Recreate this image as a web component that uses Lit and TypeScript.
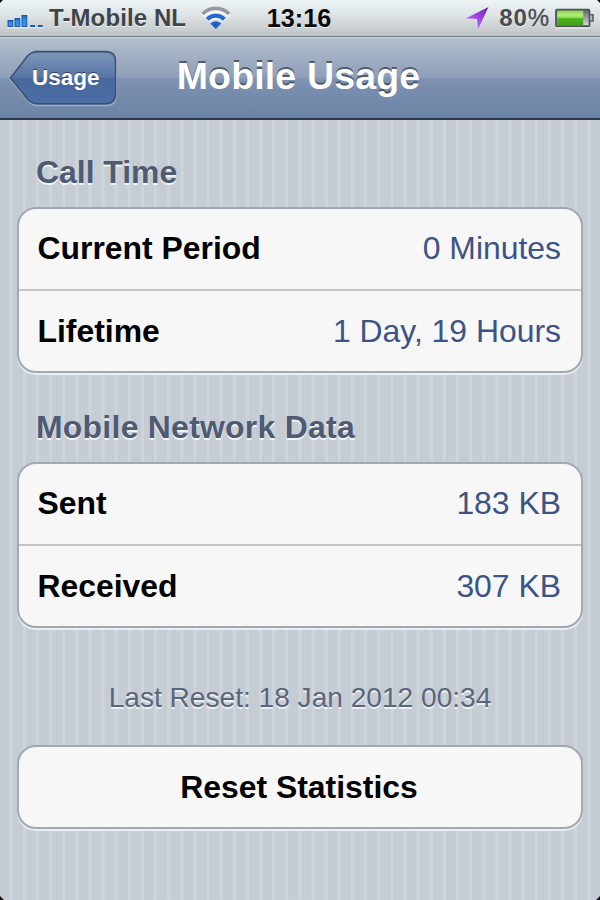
import { LitElement, html, svg, css } from "lit";
import { customElement, property } from "lit/decorators.js";

@customElement("status-bar")
class StatusBar extends LitElement {
  static styles = css`
    :host {
      display: grid;
      grid-template-columns: 1fr auto 1fr;
      height: 37px;
      box-sizing: border-box;
      border-bottom: 1px solid #707882;
      background: linear-gradient(#edf4f6 0%, #dce2e4 45%, #bec3c6 100%);
      font-weight: bold;
      line-height: 36px;
      color: #40444a;
      text-shadow: 0 1px 0 rgba(255, 255, 255, 0.7);
      white-space: nowrap;
    }
    .side { display: flex; align-items: flex-start; }
    .left { padding-left: 6px; }
    .right { justify-content: flex-end; padding-right: 5px; }
    svg { display: block; flex: none; }
    .carrier { font-size: 24px; margin-left: 5px; letter-spacing: 0.1px; }
    .wifi { margin-left: 14px; }
    .time { font-size: 25.2px; color: #0a0a0c; padding-right: 2px; }
    .percent { font-size: 24px; margin: 0 6px 0 10px; color: #484b50; letter-spacing: 0.9px; font-weight: bold; }
    .sign { font-weight: normal; letter-spacing: 0; -webkit-text-stroke: 0.4px #484b50; }
  `;

  render() {
    return html`
      <div class="side left">
        <svg width="38" height="36" viewBox="0 0 38 36">
          <defs>
            <linearGradient id="bar" x1="0" x2="0" y1="0" y2="1">
              <stop offset="0" stop-color="#1a66c4" />
              <stop offset="0.350" stop-color="#2b8bea" />
              <stop offset="1" stop-color="#2f9af6" />
            </linearGradient>
          </defs>
          <path d="M1.500 27.800h21.500M24 27.800h5.500M31 27.800h6.500" stroke="#fff" stroke-opacity=".7" />
          ${[[2, 20.500], [9, 18.500], [16, 15.500]].map(
            ([x, y]) => svg`<rect x=${x} y=${y} width="4.8" height=${26.500 - y} fill="url(#bar)" stroke="#164f9c" stroke-width=".9" />`
          )}
          <path d="M24.300 26h4.700M31.800 26h5" stroke="#1c5cae" stroke-width="1.800" />
        </svg>
        <span class="carrier">T-Mobile NL</span>
        <svg class="wifi" width="32" height="36" viewBox="0 0 32 36">
          <g fill="none" stroke="#fff" stroke-opacity=".75" transform="translate(0 1.300)">
            <path d="M2.800 15a18.500 18.500 0 0 1 26.400 0" stroke-width="4" />
            <path d="M7.700 19.500a12 12 0 0 1 16.600 0" stroke-width="4" />
          </g>
          <path d="M2.600 14a18.500 18.500 0 0 1 26.400 0" fill="none" stroke="#98999c" stroke-width="3.800" />
          <path d="M7.300 19.300a12 12 0 0 1 17 0" fill="none" stroke="#2469cc" stroke-width="4" />
          <path d="M10.800 23.600q5-3.900 10 0L15.800 28.600z" fill="#1d5fc8" stroke="#1d5fc8" stroke-width=".8" stroke-linejoin="round" />
        </svg>
      </div>
      <span class="time">13:16</span>
      <div class="side right">
        <svg width="24" height="36" viewBox="0 0 24 36">
          <defs>
            <linearGradient id="arrow" x1="1" y1="0" x2="0.200" y2="1">
              <stop offset="0" stop-color="#6a1fb4" />
              <stop offset="0.550" stop-color="#a24be8" />
              <stop offset="1" stop-color="#c88af8" />
            </linearGradient>
          </defs>
          <path d="M23.500 8L.500 19.500H12L13 31z" fill="#fff" fill-opacity=".55" />
          <path d="M23.500 7L.500 18.400l11.500.600 1 10.800z" fill="url(#arrow)" />
        </svg>
        <span class="percent">80<span class="sign">%</span></span>
        <svg width="40" height="36" viewBox="0 0 40 36">
          <defs>
            <linearGradient id="charge" x1="0" x2="0" y1="0" y2="1">
              <stop offset="0" stop-color="#86cf50" />
              <stop offset="0.300" stop-color="#b0ee78" />
              <stop offset="0.480" stop-color="#8edb54" />
              <stop offset="0.550" stop-color="#4fb31f" />
              <stop offset="1" stop-color="#3f9c18" />
            </linearGradient>
            <linearGradient id="empty" x1="0" x2="0" y1="0" y2="1">
              <stop offset="0" stop-color="#606267" />
              <stop offset="1" stop-color="#dcdce0" />
            </linearGradient>
          </defs>
          <path d="M1 28h34" stroke="#fff" stroke-opacity=".7" />
          <rect x="1" y="9.500" width="33.500" height="16.700" rx="1" fill="url(#empty)" stroke="#4b4e53" stroke-width="1.700" />
          <rect x="2.200" y="10.600" width="26" height="14.600" fill="url(#charge)" />
          <path d="M35.300 14.800h2.700v6.200h-2.700" fill="#b4b6ba" stroke="#55585d" stroke-width="1.500" />
        </svg>
      </div>
    `;
  }
}

@customElement("nav-bar")
class NavBar extends LitElement {
  static styles = css`
    :host {
      display: grid;
      grid-template-columns: 9px 108px 1fr 117px;
      height: 83px;
      box-sizing: border-box;
      border-top: 1px solid #ced7e1;
      border-bottom: 2px solid #2c3a4e;
      background: linear-gradient(#b3bfce 0%, #8f9fb9 49%, #7e92b2 51%, #6c84a6 98%, #6480a8 100%);
      color: #fff;
      font-weight: bold;
      white-space: nowrap;
    }
    .back { grid-column: 2; display: grid; margin-top: 12px; height: 57px; }
    .back svg, .back span { grid-area: 1 / 1; }
    .back span {
      padding-left: 23px;
      font-size: 22.5px;
      line-height: 55px;
      text-shadow: 0 -1px 0 rgba(30, 45, 80, 0.75);
    }
    .title {
      grid-column: 3;
      text-align: center;
      padding-right: 3px;
      font-size: 37.5px;
      letter-spacing: 0.15px;
      line-height: 76px;
      text-shadow: 0 -2px 0 rgba(62, 70, 84, 0.8);
    }
  `;

  render() {
    return html`
      <div class="back">
        <svg width="108" height="57" viewBox="0 0 108 57">
          <defs>
            <linearGradient id="fill" x1="0" x2="0" y1="0" y2="1">
              <stop offset="0" stop-color="#8096bb" />
              <stop offset="0.500" stop-color="#5674a4" />
              <stop offset="0.510" stop-color="#47689e" />
              <stop offset="1" stop-color="#4a6ea5" />
            </linearGradient>
          </defs>
          <path d="M1.500 29.500L18.500 7.500Q24 2.500 29 2.500H97q10 0 10 10v33q0 10-10 10H29q-5.500 0-10.500-5z" fill="none" stroke="#b5c3d8" stroke-opacity=".65" stroke-width="1.400" />
          <path d="M1.500 28L18.500 6Q23 1.500 28 1.500H97q9.500 0 9.500 9.500v33q0 9.800-9.500 9.800H28q-5 0-9.500-4.500z" fill="url(#fill)" stroke="#3d4f6e" stroke-width="1.500" stroke-linejoin="round" />
          <path d="M24 3.300q2-.7 4-.7H97q5 0 7 4" fill="none" stroke="#52658a" stroke-opacity=".7" />
        </svg>
        <span>Usage</span>
      </div>
      <div class="title">Mobile Usage</div>
    `;
  }
}

@customElement("cell-group")
class CellGroup extends LitElement {
  @property({ attribute: false }) rows: string[][] = [];

  static styles = css`
    :host {
      display: block;
      box-sizing: border-box;
      border: 2px solid #a2a8b1;
      border-radius: 19px;
      background: #f7f7f7;
      box-shadow: 0 2px 0 rgba(240, 244, 248, 0.85);
      font-size: 31.9px;
      line-height: 79px;
      white-space: nowrap;
    }
    .row { display: flex; justify-content: space-between; height: 80px; padding: 0 20px 0 18.500px; }
    .row + .row { border-top: 2px solid #c3c5c8; line-height: 81px; }
    .single { justify-content: center; padding: 0 20px 0 18px; line-height: 81px; }
    .label { font-weight: bold; color: #000; }
    .value { color: #3c5485; }
  `;

  render() {
    return this.rows.map(
      ([label, value]) => html`
        <div class="row ${value ? "" : "single"}">
          <span class="label">${label}</span>
          ${value ? html`<span class="value">${value}</span>` : null}
        </div>
      `
    );
  }
}

@customElement("app-root")
class AppRoot extends LitElement {
  static styles = css`
    :host {
      display: flex;
      flex-direction: column;
      position: relative;
      width: 600px;
      height: 900px;
      overflow: hidden;
      font-family: "Liberation Sans", Arial, sans-serif;
      background: #c5ccd4;
    }
    main {
      flex: 1;
      display: flex;
      flex-direction: column;
      padding: 0 17px;
      background: repeating-linear-gradient(
        90deg,
        #c5ccd4 0,
        #c5ccd4 9.2px,
        #cdd5db 10.2px,
        #cdd5db 12.4px,
        #c5ccd4 13.125px
      );
    }
    h2 {
      margin: 0;
      padding-left: 19px;
      font-size: 31.9px;
      font-weight: bold;
      color: #4f5a73;
      text-shadow: 0 2px 0 rgba(255, 255, 255, 0.75);
    }
    .first { height: 87px; line-height: 104px; }
    .second { height: 89px; line-height: 109px; letter-spacing: 0.28px; }
    .note {
      height: 117px;
      line-height: 140px;
      text-align: center;
      font-size: 28.1px;
      color: #5b667c;
      text-shadow: 0 2px 0 rgba(255, 255, 255, 0.7);
    }
    .corners { position: absolute; inset: 0; }
  `;

  render() {
    return html`
      <status-bar></status-bar>
      <nav-bar></nav-bar>
      <main>
        <h2 class="first">Call Time</h2>
        <cell-group .rows=${[["Current Period", "0 Minutes"], ["Lifetime", "1 Day, 19 Hours"]]}></cell-group>
        <h2 class="second">Mobile Network Data</h2>
        <cell-group .rows=${[["Sent", "183 KB"], ["Received", "307 KB"]]}></cell-group>
        <div class="note">Last Reset: 18 Jan 2012 00:34</div>
        <cell-group .rows=${[["Reset Statistics"]]}></cell-group>
      </main>
      <svg class="corners" width="600" height="900" viewBox="0 0 600 900">
        <path d="M0 0h3L0 3zM600 0h-3l3 3zM0 900v-4l4 4zM600 900v-4l-4 4z" fill="#111" />
      </svg>
    `;
  }
}
